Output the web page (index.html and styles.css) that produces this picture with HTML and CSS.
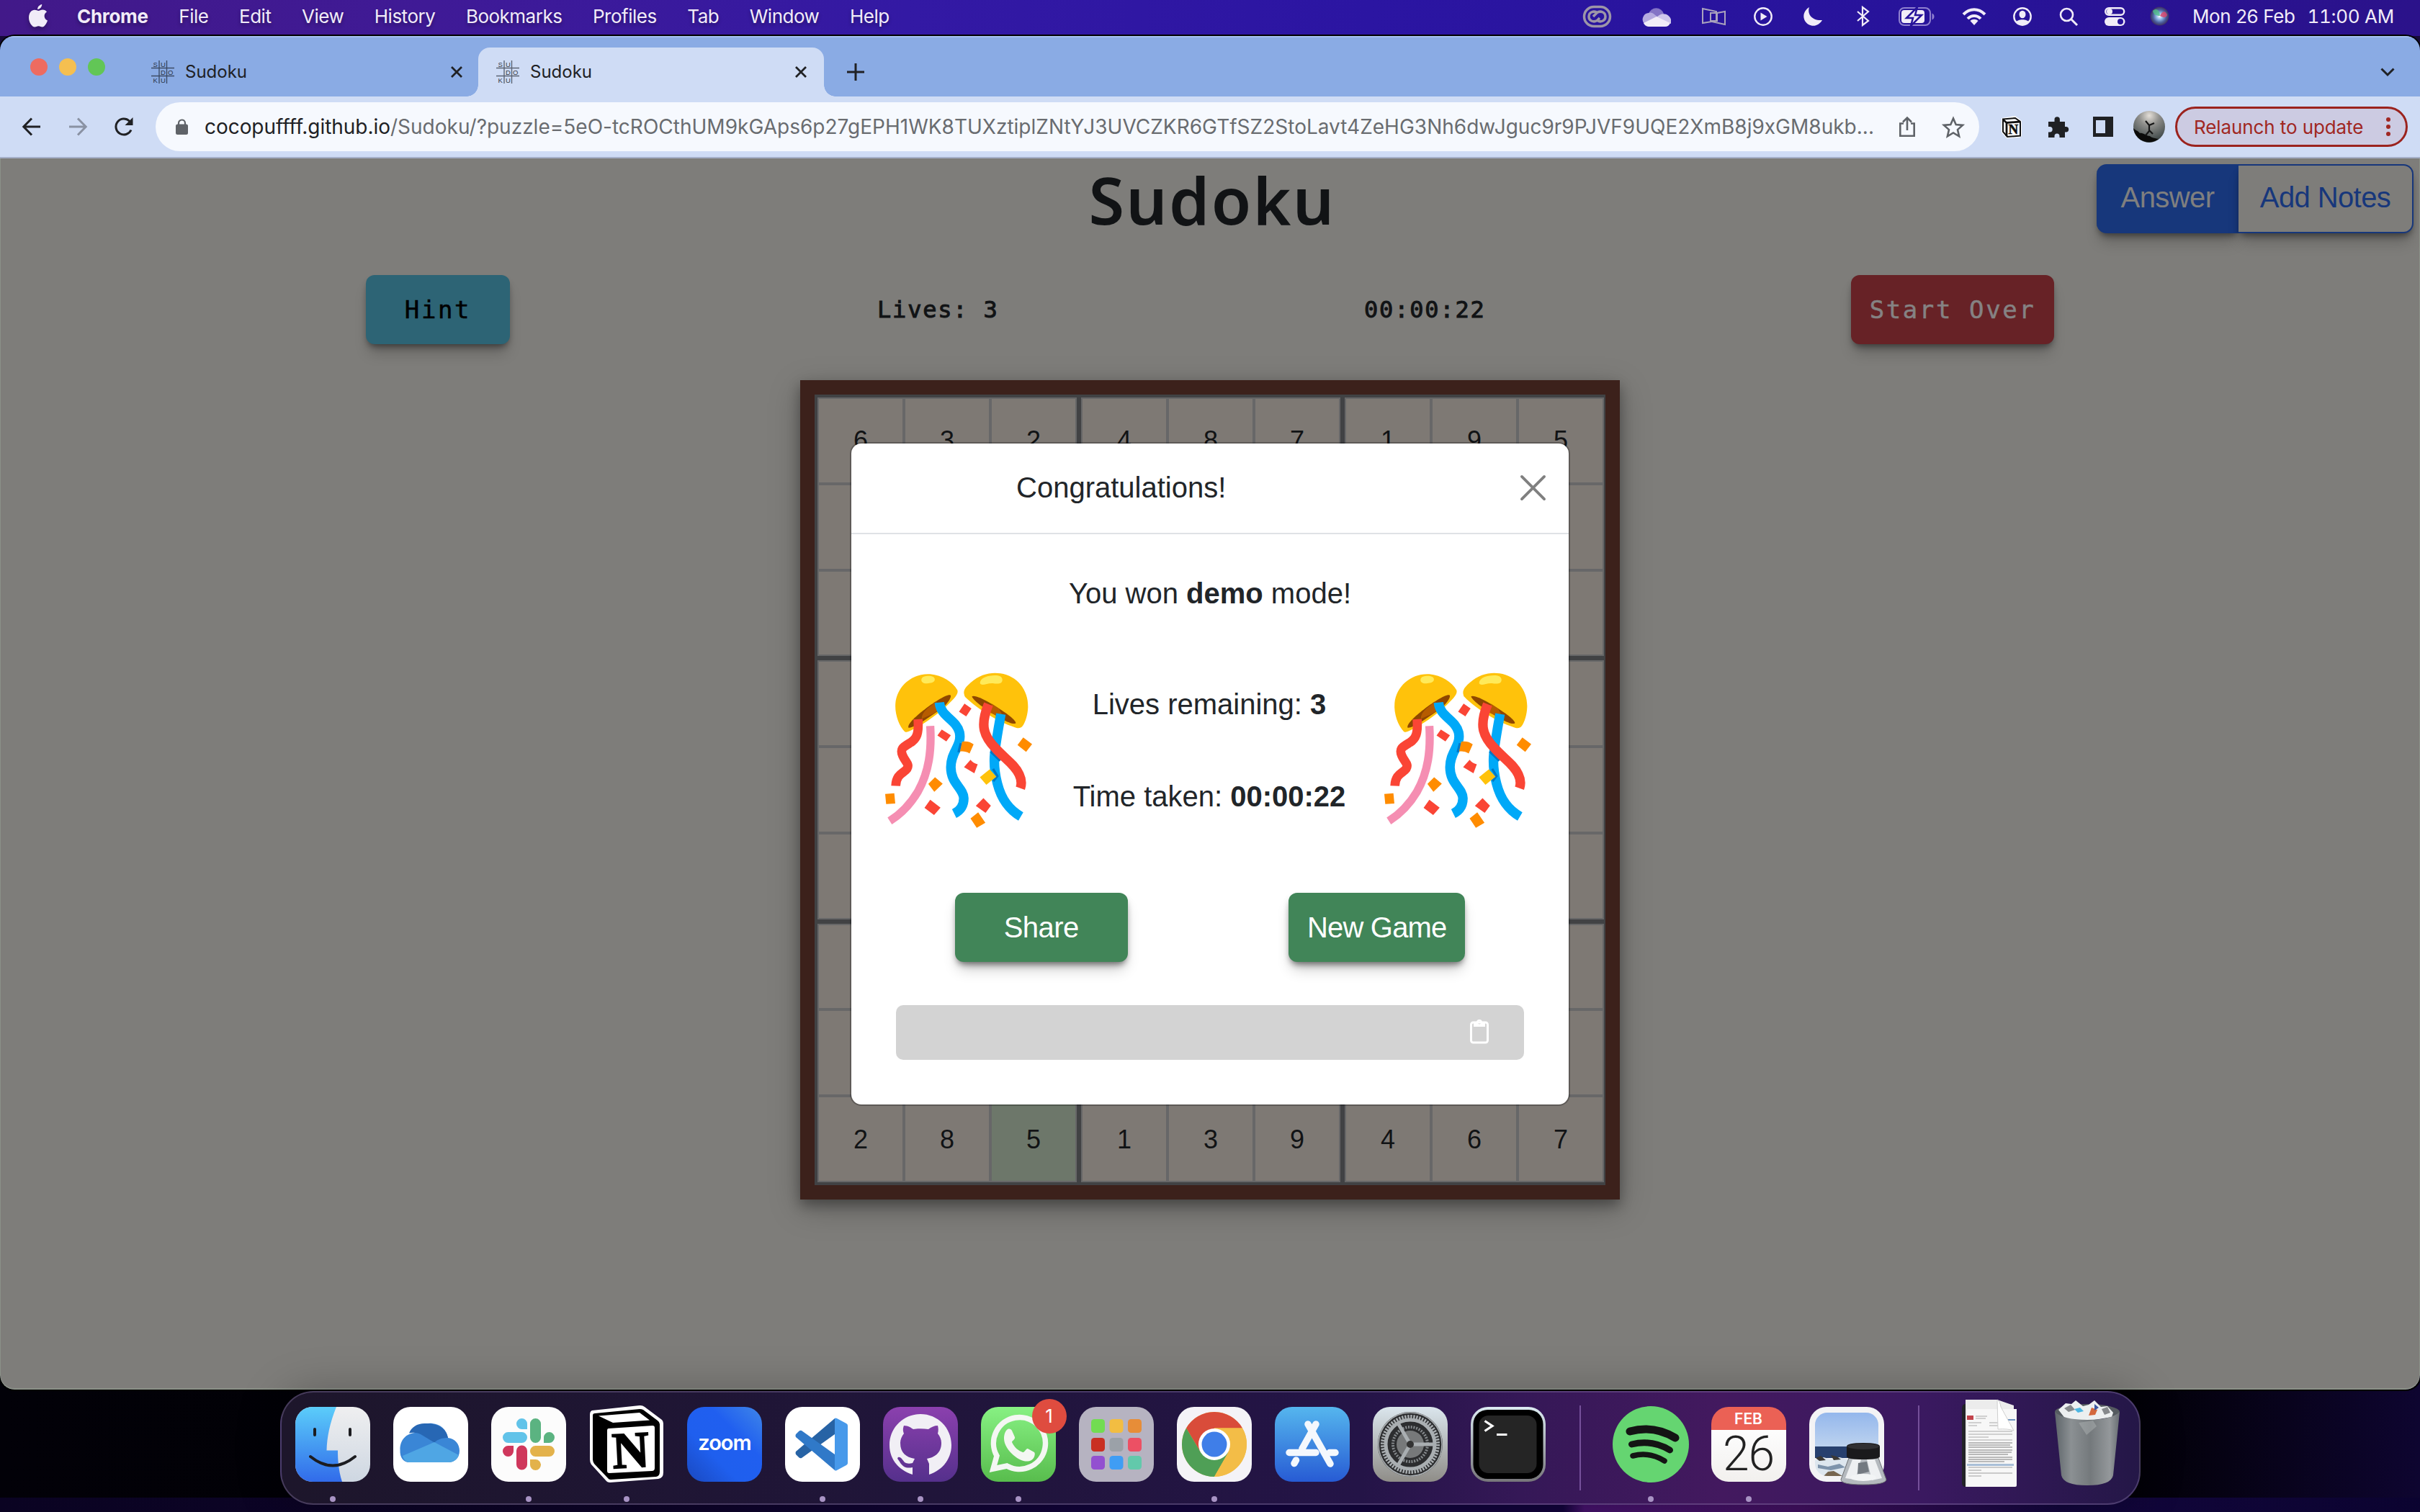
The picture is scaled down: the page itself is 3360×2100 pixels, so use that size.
FILE: index.html
```html
<!DOCTYPE html>
<html lang="en">
<head>
<meta charset="utf-8">
<title>Sudoku</title>
<link rel="stylesheet" href="styles.css">
</head>
<body>
<header class="menubar">
  <svg class="apple" viewBox="0 0 26 32"><path fill="#f1ecf8" d="M18.200 0c.3 3-2.600 7-6 7C11.800 4 14.800.6 18.200 0zM13.500 9c1.500 0 3.200-1.500 5.800-1.500 2.300 0 4.500 1.200 5.700 3.100-5 3-4.200 9.900 1 12C24.500 27 21.800 31.500 18.800 31.500c-2 0-2.800-1.300-5.300-1.300s-3.400 1.300-5.300 1.300C4.500 31.500 0 25 0 18.500 0 11.800 4 7.800 8 7.800c2.300 0 4 1.200 5.500 1.200z"/></svg>
  <nav class="menus"><b>Chrome</b><span>File</span><span>Edit</span><span>View</span><span>History</span><span>Bookmarks</span><span>Profiles</span><span>Tab</span><span>Window</span><span>Help</span></nav>
  <div class="status">
    <svg width="39" height="30" viewBox="0 0 39 30" fill="none" stroke="#9c95a8" stroke-width="3.500"><rect x="1.500" y="1.500" width="36" height="27" rx="13.500"/><path d="M20 10c-5-4-12-1-12 5s7 9 12 5l3-3M14 15l5-5c5-4 12-1 12 5s-7 9-12 5"/></svg>
    <svg width="40" height="28" viewBox="0 0 40 28"><path fill="#8474c6" d="M9 10a11 11 0 0 1 21 0l-9 7z"/><path fill="#b5aae0" d="M3 24a9 9 0 0 1 6-15c3-1 6 0 8 2l10 8z"/><path fill="#cfc7ec" d="M20 15c8-9 18-4 20 3v6z"/><path fill="#f1ecf8" d="M2 23 20 14l19 9c-1 3-4 5-7 5H9c-3 0-6-2-7-5z"/></svg>
    <svg width="33" height="24" viewBox="0 0 33 24" fill="none" stroke="#aaa3bd" stroke-width="2"><path d="M1 1l19 4v13L1 21zM12 7h9v11h-9zM21 7l11-2v18l-18-4"/></svg>
    <svg width="26" height="26" viewBox="0 0 26 26"><circle cx="13" cy="13" r="11.700" fill="none" stroke="#f1ecf8" stroke-width="2.400"/><path fill="#f1ecf8" d="M9.500 7.500v11l9-5.500z"/></svg>
    <svg width="26" height="26" viewBox="0 0 26 26"><path fill="#f1ecf8" d="M8 0C5 9 11 19 26 18 22 25 14 28 7 24-1 19-3 7 8 0z"/></svg>
    <svg width="18" height="27" viewBox="0 0 18 27" fill="none" stroke="#f1ecf8" stroke-width="2.200"><path d="M1 7l15 13-8 6V1l8 6L1 20"/></svg>
    <svg width="50" height="26" viewBox="0 0 50 26"><rect x="1" y="1" width="43" height="24" rx="7" fill="none" stroke="#8f80cf" stroke-width="2"/><rect x="4" y="4" width="32" height="18" rx="4" fill="#f1ecf8"/><path d="M46.500 8.500c4 1 4 8 0 9z" fill="#8f80cf"/><path d="M26 0 11 15h9l-3 11L32 11h-9z" fill="#f1ecf8" stroke="#27139a" stroke-width="2.500"/></svg>
    <svg width="34" height="24" viewBox="0 0 34 24" fill="none" stroke="#f1ecf8" stroke-width="4"><path d="M2 9c9-9 21-9 30 0M8 15c5-5.500 13-5.500 18 0"/><path fill="#f1ecf8" stroke="none" d="M17 24l-5.500-6c3-3 8-3 11 0z"/></svg>
    <svg width="26" height="26" viewBox="0 0 26 26"><circle cx="13" cy="13" r="11.700" fill="none" stroke="#f1ecf8" stroke-width="2.400"/><ellipse cx="13" cy="10" rx="4.500" ry="5.200" fill="#f1ecf8"/><path fill="#f1ecf8" d="M4 21c2-5 16-5 18 0-5 5-13 5-18 0z"/></svg>
    <svg width="26" height="26" viewBox="0 0 26 26" fill="none" stroke="#f1ecf8" stroke-width="2.600"><circle cx="10.500" cy="10.500" r="8.500"/><path d="M17 17l8 8" stroke-width="3"/></svg>
    <svg width="29" height="26" viewBox="0 0 29 26"><rect x="1.200" y="1.200" width="26" height="9.600" rx="4.800" fill="none" stroke="#f1ecf8" stroke-width="2.400"/><circle cx="7" cy="6" r="4" fill="#f1ecf8"/><rect y="14" width="28.500" height="12" rx="6" fill="#f1ecf8"/><circle cx="22" cy="20" r="4" fill="#27139a"/></svg>
    <svg width="27" height="27" viewBox="0 0 27 27"><defs><radialGradient id="siri"><stop offset="0" stop-color="#fff"/><stop offset=".35" stop-color="#8fb5e8"/><stop offset=".7" stop-color="#4b5f9c"/><stop offset="1" stop-color="#3e2f63"/></radialGradient></defs><circle cx="13.500" cy="13.500" r="13" fill="url(#siri)"/><path d="M4 6c5-4 9-2 10 7-6 0-9-2-10-7z" fill="#53c08a" opacity=".8"/><path d="M14 13c4-9 9-6 10-1-2 4-5 4-10 1z" fill="#d8486f" opacity=".85"/></svg>
    <div class="clock"><span>Mon 26 Feb</span><span class="time">11:00 AM</span></div>
  </div>
</header>

<main class="window">
  <div class="tabstrip">
    <div class="lights"><i class="red"></i><i class="amber"></i><i class="green"></i></div>
    <div class="tab"><svg class="favicon" viewBox="0 0 32 32"><g stroke="#3d4c66" stroke-width="1.400"><path d="M11 0v32M21.500 0v32M0 10.500h32M0 21.500h32"/></g><g font-family="Liberation Sans" font-size="9.500" fill="#2b3548"><text x="2.500" y="8.500">S</text><text x="13" y="8.500">U</text><text x="13" y="19.500">D</text><text x="23" y="19.500">O</text><text x="2.500" y="31">K</text><text x="13" y="31">U</text></g></svg><span>Sudoku</span><svg class="x" viewBox="0 0 16 16"><path d="M1 1l14 14M15 1L1 15"/></svg></div>
    <div class="tab active"><svg class="favicon" viewBox="0 0 32 32"><g stroke="#5b6474" stroke-width="1.400"><path d="M11 0v32M21.500 0v32M0 10.500h32M0 21.500h32"/></g><g font-family="Liberation Sans" font-size="9.500" fill="#363b45"><text x="2.500" y="8.500">S</text><text x="13" y="8.500">U</text><text x="13" y="19.500">D</text><text x="23" y="19.500">O</text><text x="2.500" y="31">K</text><text x="13" y="31">U</text></g></svg><span>Sudoku</span><svg class="x" viewBox="0 0 16 16"><path d="M1 1l14 14M15 1L1 15"/></svg></div>
    <svg class="newtab" viewBox="0 0 24 24"><path d="M12 0v24M0 12h24"/></svg>
    <svg class="chevron" viewBox="0 0 20 12"><path d="M1.500 1.500 10 10l8.500-8.500"/></svg>
  </div>
  <div class="toolbar">
    <svg class="nav" viewBox="0 0 26 26"><path d="M25 13H2M13 1.500 1.800 13 13 24.500"/></svg>
    <svg class="nav off" viewBox="0 0 26 26"><path d="M1 13h23M13 1.500 24.200 13 13 24.500"/></svg>
    <svg class="nav reload" viewBox="0 0 26 26"><path d="M23 17.500A11 11 0 1 1 20.500 5L24 8.500"/><path d="M25.500 0v11h-11z" fill="#202124" stroke="none"/></svg>
    <div class="address">
      <svg class="lock" viewBox="0 0 17 22"><path d="M4 9V6a4.500 4.500 0 0 1 9 0v3" fill="none" stroke="#5f6368" stroke-width="2.200"/><rect y="7.500" width="17" height="14.500" rx="2.500" fill="#5f6368"/></svg>
      <p class="url"><span class="host">cocopuffff.github.io</span><span class="path">/Sudoku/?puzzle=5eO-tcROCthUM9kGAps6p27gEPH1WK8TUXztiplZNtYJ3UVCZKR6GTfSZ2StoLavt4ZeHG3Nh6dwJguc9r9PJVF9UQE2XmB8j9xGM8ukb...</span></p>
      <svg class="share" viewBox="0 0 22 28"><path d="M6 9.500H1.300v17.200h19.400V9.500H16M11 19V2M5 7.500l6-6 6 6"/></svg>
      <svg class="star" viewBox="0 0 30 28"><path d="M15 2.500l3.700 8.600 9.300.8-7 6.200 2.100 9.200L15 22.400l-8.100 4.900L9 18.100l-7-6.200 9.300-.8z"/></svg>
    </div>
    <div class="extensions">
      <svg width="30" height="31" viewBox="0 0 30 31"><path d="M1 3 20 0l9 7v21l-3 2-18 1-7-8z" fill="#fff"/><path d="M3 4.500 20 3l7 5v19.500L9 29l-6-7z" fill="#fff" stroke="#111" stroke-width="2"/><path d="M3 5l5 4.500V28M8 9.500 27 8" fill="none" stroke="#111" stroke-width="2.800"/><text x="10.500" y="25" font-family="Liberation Serif" font-weight="bold" font-size="19" fill="#111" stroke="#111" stroke-width=".6">N</text></svg>
      <svg width="30" height="30" viewBox="0 0 30 30"><path fill="#202124" d="M2 8h8.500V5a3.700 3.700 0 0 1 7.400 0v3H25v7h1.500a3.700 3.700 0 0 1 0 7.400H25V30h-7.500v-2a3.500 3.500 0 0 0-7 0v2H2v-7.500h2a3.700 3.700 0 0 0 0-7.400H2z"/></svg>
      <svg width="28" height="28" viewBox="0 0 28 28"><path fill="#202124" fill-rule="evenodd" d="M0 0h28v28H0zM4 5v18h13V5z"/></svg>
    </div>
    <svg class="avatar" viewBox="0 0 44 44"><defs><radialGradient id="sky" cx=".5" cy=".15" r=".8"><stop offset="0" stop-color="#e4dfd8"/><stop offset=".4" stop-color="#8e8e8b"/><stop offset="1" stop-color="#3f4848"/></radialGradient></defs><circle cx="22" cy="22" r="22" fill="url(#sky)"/><path fill="#0b0b0a" d="M0 24c4 4 6 3 9 7 5-1 8 4 14 4 3 3 8 3 12 4A22 22 0 0 1 0 24z"/><path d="M17 14l5 6 7-3M22 19v9l-5 6M22 27l5 5" stroke="#151515" stroke-width="2.200" fill="none"/></svg>
    <div class="relaunch"><span>Relaunch to update</span><svg viewBox="0 0 6 26"><circle cx="3" cy="3" r="3"/><circle cx="3" cy="13" r="3"/><circle cx="3" cy="23" r="3"/></svg></div>
  </div>

  <section class="page">
    <div class="pagehead">
      <h1>Sudoku</h1>
      <div class="mode"><button class="on">Answer</button><button>Add Notes</button></div>
    </div>
    <div class="stats">
      <button class="hint">Hint</button>
      <span class="stat">Lives: 3</span>
      <span class="stat">00:00:22</span>
      <button class="restart">Start Over</button>
    </div>
    <div class="board">
      <div class="box"><i>6</i><i>3</i><i>2</i><i></i><i></i><i></i><i></i><i></i><i></i></div>
      <div class="box"><i>4</i><i>8</i><i>7</i><i></i><i></i><i></i><i></i><i></i><i></i></div>
      <div class="box"><i>1</i><i>9</i><i>5</i><i></i><i></i><i></i><i></i><i></i><i></i></div>
      <div class="box"><i></i><i></i><i></i><i></i><i></i><i></i><i></i><i></i><i></i></div>
      <div class="box"><i></i><i></i><i></i><i></i><i></i><i></i><i></i><i></i><i></i></div>
      <div class="box"><i></i><i></i><i></i><i></i><i></i><i></i><i></i><i></i><i></i></div>
      <div class="box"><i></i><i></i><i></i><i></i><i></i><i></i><i>2</i><i>8</i><i class="entered">5</i></div>
      <div class="box"><i></i><i></i><i></i><i></i><i></i><i></i><i>1</i><i>3</i><i>9</i></div>
      <div class="box"><i></i><i></i><i></i><i></i><i></i><i></i><i>4</i><i>6</i><i>7</i></div>
    </div>

    <div class="modal">
      <div class="modalhead"><h2>Congratulations!</h2><svg viewBox="0 0 36 36"><path d="M2 2l32 32M34 2 2 34"/></svg></div>
      <p class="won">You won <b>demo</b> mode!</p>
      <div class="party">
        <svg class="confetti" viewBox="147 163 613 647">
          <defs><g id="confetti">
            <path fill="#ffc20b" d="M228 408C205 385 186 335 190 290 197 217 262 164 335 169c50 5 95 33 113 66 6 14-8 32-40 62-45 42-105 85-160 110-8 4-14 5-20 1z"/>
            <path fill="#ffc20b" d="M477 255c-5-18 4-30 26-50 40-36 85-45 125-39 70 10 117 70 115 140-1 30-10 62-23 80-8 10-20 10-34 4-70-22-150-75-195-116-8-8-13-11-14-19z"/>
            <path fill="#8f4700" d="M244 392c-4-12 20-38 60-70 45-36 100-70 114-66 9 4-5 28-30 53l-85 58c-28 18-52 28-59 25z"/>
            <path fill="#b65c00" d="M300 355c-2-15 10-40 60-70l30 20-40 28z"/>
            <path fill="#8f4700" d="M509 262c7-7 42 6 80 30 50 29 105 68 103 81-5 7-28 0-60-18-50-26-120-76-123-93z"/>
            <path fill="#b65c00" d="M592 293l30 20 20 40-60-24z"/>
            <path fill="#ffea59" d="M298 192c2-14 17-16 30-16 15 0 27 5 26 16-1 11-14 14-27 15-17 3-30-3-29-15zM543 208c-2-16 15-28 40-32 28-4 52-2 53 16 0 19-20 18-40 15-23-2-45 14-53 1z"/>
            <g fill="none">
              <path stroke="#f58eb2" stroke-width="34" d="M335 385c6 100-4 190-52 275-32 54-70 92-117 122"/>
              <path stroke="#fa4535" stroke-width="38" d="M284 357c4 60-5 80-30 97-30 18-47 25-34 55 12 28 30 35 18 55-12 18-45 20-47 71"/>
              <path stroke="#00a9f8" stroke-width="40" d="M630 335c-28 160-38 200-15 290 18 70 50 110 98 138"/>
              <path stroke="#00a9f8" stroke-width="40" d="M373 287c6 60 70 70 84 125 12 55-36 80-36 145 0 70 52 85 54 130 0 30-12 50-40 64" />
              <path stroke="#0077c5" stroke-width="10" d="M587 492l40 38M597 564l18 30-17 22M463 457l-10 38"/>
              <path stroke="#fa4535" stroke-width="40" d="M578 294c-34 85-24 130 30 185 35 40 78 65 98 108 11 23 12 38 5 58"/>
            </g>
            <path fill="#fa4535" d="M478 292l29 20-22 33-30-19zM383 400l38 24-19 26-37-25zM503 526c8 10 17 15 30 19l-14 38-43-26zM335 693l43 33-27 31-40-30zM557 686l31 32-22 30-41-29z"/>
            <path fill="#ff8c00" d="M723 433l37 28-25 32-36-28zM468 451c18-4 36 1 48 11l-17 38c-13-8-26-10-40-8zM355 599l32 27-35 34-25-33zM147 669l38-3 4 43-38 2zM535 746l30 43-36 21-26-39z"/>
            <path fill="#ffc20b" d="M583 566l28 31-42 34-27-32z"/>
          </g></defs>
          <use href="#confetti"/>
        </svg>
        <div class="result"><p>Lives remaining: <b>3</b></p><p>Time taken: <b>00:00:22</b></p></div>
        <svg class="confetti" viewBox="147 163 613 647"><use href="#confetti"/></svg>
      </div>
      <div class="actions"><button class="sharebtn">Share</button><button class="newgame">New Game</button></div>
      <div class="copybox"><svg viewBox="0 0 26 35"><rect x="1.500" y="5" width="23" height="28" rx="3" fill="none" stroke="#fff" stroke-width="3"/><path fill="#fff" fill-rule="evenodd" d="M5 5h4a4 4 0 0 1 8 0h4v6H5zM13 3.500a2 2 0 1 0 0 4 2 2 0 0 0 0-4z"/></svg></div>
    </div>
  </section>
</main>

<footer class="dock">
  <div class="app running"><svg viewBox="0 0 104 104"><defs><linearGradient id="fblue" x2="0" y2="1"><stop offset="0" stop-color="#5bcdfa"/><stop offset="1" stop-color="#316bea"/></linearGradient><linearGradient id="fgrey" x2="0" y2="1"><stop offset="0" stop-color="#efeff0"/><stop offset="1" stop-color="#ced7e2"/></linearGradient></defs><rect width="104" height="104" rx="24" fill="url(#fgrey)"/><path fill="url(#fblue)" d="M24 0h33C48 22 44 42 43.500 60.500H59C59 78 61 92 65 104H24A24 24 0 0 1 0 80V24A24 24 0 0 1 24 0z"/><path d="M27 31v8M76 31v8M21 69q31 25 62 0" fill="none" stroke="#1c1c20" stroke-width="4" stroke-linecap="round"/></svg></div>
  <div class="app"><svg viewBox="0 0 104 104"><rect width="104" height="104" rx="24" fill="#fff"/><path fill="#3a86d6" d="M22 77C14 77 9 70 9.500 60 9 46 18 37 30 36c4-9 14-14 24-13 12 1 20 9 22 20 10 1 16 9 16 18 0 10-7 16-15 16z"/><path fill="#2767b4" d="M22 36.500c3-9 13-14.500 24-13.500C62 23 74 30 76 43c-8 0-14 2-19 6.500L38 38c-5-2-10-3-16-1.500z"/><path fill="#4fa6e4" d="M13 68l44-19 34 18c-2 6-8 10-14 10H22c-4 0-8-4-9-9z"/></svg></div>
  <div class="app running"><svg viewBox="0 0 104 104"><rect width="104" height="104" rx="24" fill="#fcfcfc"/><path fill="#62c3e9" d="M50 31H42.500A7.500 7.500 0 1 1 50 23.500zM23.500 35h19a7.500 7.500 0 0 1 0 15h-19a7.500 7.500 0 0 1 0-15z"/><path fill="#5bb381" d="M54 23.500a7.500 7.500 0 0 1 15 0v19a7.500 7.500 0 0 1-15 0zM73 50v-7.500a7.500 7.500 0 1 1 7.500 7.500z"/><path fill="#cf375c" d="M35 61a7.500 7.500 0 0 1 15 0v19a7.500 7.500 0 0 1-15 0zM31 54v7.500a7.500 7.500 0 1 1-7.500-7.500z"/><path fill="#e3b24b" d="M61.500 54h19a7.500 7.500 0 0 1 0 15h-19a7.500 7.500 0 0 1 0-15zM54 73h7.500a7.500 7.500 0 1 1-7.500 7.500z"/></svg></div>
  <div class="app running"><svg viewBox="0 0 104 104"><path fill="#fff" d="M4 5 70-2q4-.5 7 2l24 18q2 2 2 5v68q0 8-7 9l-67 5q-4 0-6-3L3 80q-2-3-2-7V11q0-5 3-6z"/><path d="M8 9 70 3q3 0 5 1l20 15q3 2 3 5v66q0 6-5 7l-63 4q-3 0-4-2L7 79q-2-3-2-6V12q0-3 3-3z"/><path fill="#fff" d="M13 12.500 70 8l14 10.500L33 22zM27 30l61-4q3 0 3 3v56q0 4-4 4l-59 3q-3 0-3-3V33q0-3 2-3z"/><text x="32" y="84" font-family="Liberation Serif" font-weight="bold" font-size="71" stroke="#000" stroke-width="2" transform="rotate(-3 58 60)">N</text></svg></div>
  <div class="app"><svg viewBox="0 0 104 104"><defs><linearGradient id="zb" x1="1" x2="0" y2="1"><stop offset="0" stop-color="#3f86e8"/><stop offset=".35" stop-color="#205ff0"/><stop offset=".65" stop-color="#1f5fee"/><stop offset="1" stop-color="#1a49c0"/></linearGradient></defs><rect width="104" height="104" rx="24" fill="url(#zb)"/><text x="52" y="60" text-anchor="middle" font-family="Inter" font-weight="600" font-size="29" letter-spacing="-1" fill="#fff">zoom</text></svg></div>
  <div class="app running"><svg viewBox="0 0 104 104"><rect width="104" height="104" rx="24" fill="#fff"/><path fill="#2763a5" d="M69 16v22L23 71q-2 1-4-1l-4-4q-1-2 0-4z"/><path fill="#3079c8" d="M69 88V66L23 33q-2-1-4 1l-4 4q-1 2 0 4z"/><path fill="#4799ea" d="M69 16q1-1 3 0l13 7q2 1 2 3v52q0 2-2 3l-13 7q-2 1-3 0z"/></svg></div>
  <div class="app running"><svg viewBox="0 0 104 104"><defs><linearGradient id="gh" x2="0" y2="1"><stop offset="0" stop-color="#8b40ae"/><stop offset="1" stop-color="#55308c"/></linearGradient></defs><rect width="104" height="104" rx="24" fill="url(#gh)"/><path fill="#f1eff5" d="M52 10C28 10 9 29 9 53c0 20 13 35 32 41V84c-9 2-14-1-18-8-2-3-4-4-2-6 4-1 6 4 9 7 3 2 7 2 11 1l3-6c-12-2-20-8-20-22 0-5 2-9 5-13-2-5-1-8 0-11 6 0 10 3 13 5 7-1 14-1 21 0 4-3 8-5 13-5 1 4 1 7 0 11 3 4 5 8 5 13 0 14-9 20-20 22l3 7v15c18-6 31-21 31-41C95 29 76 10 52 10z"/></svg></div>
  <div class="app running"><svg viewBox="0 0 104 104"><defs><linearGradient id="wa" x2="0" y2="1"><stop offset="0" stop-color="#87f183"/><stop offset="1" stop-color="#58bd4d"/></linearGradient></defs><rect width="104" height="104" rx="24" fill="url(#wa)"/><path d="M17 86l5-18a36 36 0 1 1 14 14z" fill="none" stroke="#f4f7f3" stroke-width="7.500"/><path fill="#f4f7f3" d="M37 31c3-1 5 0 6 2l4 9c1 3-4 5-4 7 3 7 9 12 15 14 3 0 5-6 7-5l9 5c2 2 0 9-4 11-7 4-17 0-25-7-7-6-13-15-13-23 0-6 2-11 5-13z"/></svg><b class="badge">1</b></div>
  <div class="app"><svg viewBox="0 0 104 104"><rect width="104" height="104" rx="24" fill="#b6b3c1"/><g><rect x="17" y="17" width="19" height="19" rx="4.500" fill="#72dc52"/><rect x="42.500" y="17" width="19" height="19" rx="4.500" fill="#f2bd42"/><rect x="68" y="17" width="19" height="19" rx="4.500" fill="#e78d38"/><rect x="17" y="43" width="19" height="19" rx="4.500" fill="#c92f23"/><rect x="42.500" y="43" width="19" height="19" rx="4.500" fill="#9ba1a8"/><rect x="68" y="43" width="19" height="19" rx="4.500" fill="#ec5064"/><rect x="17" y="68" width="19" height="19" rx="4.500" fill="#9350d0"/><rect x="42.500" y="68" width="19" height="19" rx="4.500" fill="#3f9df4"/><rect x="68" y="68" width="19" height="19" rx="4.500" fill="#62c9ab"/></g></svg></div>
  <div class="app running"><svg viewBox="0 0 104 104"><rect width="104" height="104" rx="24" fill="#f4f3f7"/><circle cx="52" cy="52" r="45" fill="#f3bd47"/><path fill="#d94c3a" d="M13 29.500A45 45 0 0 1 91 29.500H52L33 63z"/><path fill="#4f9f56" d="M13 29.500A45 45 0 0 0 52 97l19.500-34H33z"/><path fill="#f3bd47" d="M52 97a45 45 0 0 0 39-67.500H52L71.500 63z"/><circle cx="52" cy="52" r="22" fill="#fff"/><circle cx="52" cy="52" r="17.500" fill="#3f7ee8"/></svg></div>
  <div class="app"><svg viewBox="0 0 104 104"><defs><linearGradient id="as" x2="0" y2="1"><stop offset="0" stop-color="#55b6ee"/><stop offset="1" stop-color="#275bd4"/></linearGradient></defs><rect width="104" height="104" rx="24" fill="url(#as)"/><g stroke="#f4f8fd" stroke-width="9.500" stroke-linecap="round"><path d="M20 63.500h37M76 63.500h8M46 24l31 55M57 24 38 58M29.500 74 27 78.500"/></g></svg></div>
  <div class="app"><svg viewBox="0 0 104 104"><defs><linearGradient id="st" x2="0" y2="1"><stop offset="0" stop-color="#dbe6ed"/><stop offset="1" stop-color="#8f8d88"/></linearGradient></defs><rect width="104" height="104" rx="24" fill="url(#st)"/><circle cx="52" cy="52" r="45" fill="#2c2d2f"/><g fill="none" stroke="#a9aeb1"><circle cx="52" cy="52" r="38.500" stroke-width="5" stroke-dasharray="2.400 1.630"/><circle cx="52" cy="52" r="34" stroke-width="5"/><circle cx="52" cy="52" r="24" stroke-width="4" stroke-dasharray="2 1.770" stroke="#85898c"/></g><circle cx="52" cy="52" r="19" fill="#77797a"/><circle cx="52" cy="52" r="44" fill="none" stroke="#a9aeb1" stroke-width="1.500"/><path d="M52 52h33M52 52 35.500 23.500M52 52 35.500 80.500" stroke="#a9aeb1" stroke-width="5"/><circle cx="52" cy="52" r="5" fill="#333"/></svg></div>
  <div class="app"><svg viewBox="0 0 104 104"><defs><linearGradient id="tm" x2="0" y2="1"><stop offset="0" stop-color="#dcebf2"/><stop offset="1" stop-color="#77767a"/></linearGradient></defs><rect width="104" height="104" rx="24" fill="url(#tm)"/><rect x="3.500" y="4" width="97" height="96" rx="20" fill="#000"/><rect x="11.500" y="12" width="80" height="80" rx="13" fill="#252525"/><path d="M19.500 19.500 30 26.500l-10.500 7M36 38.500h14.500" fill="none" stroke="#fff" stroke-width="3.200"/></svg></div>
  <i class="divider"></i>
  <div class="app running"><svg viewBox="0 0 104 104"><circle cx="52" cy="52" r="53" fill="#65d571"/><g fill="none" stroke="#141414" stroke-linecap="round"><path d="M23 34q33-9 63 9" stroke-width="11"/><path d="M25.500 52q28-7 53 8" stroke-width="9"/><path d="M27 68q23-6 44 7" stroke-width="7.500"/></g></svg></div>
  <div class="app running calendar"><span class="month">FEB</span><span class="day">26</span></div>
  <div class="app"><svg viewBox="0 0 104 104"><defs><linearGradient id="pv" x2="0" y2="1"><stop offset="0" stop-color="#94b7ec"/><stop offset="1" stop-color="#bdd3ef"/></linearGradient></defs><rect width="104" height="104" rx="24" fill="#f3f3f5"/><clipPath id="ph"><rect x="8" y="8" width="88" height="88" rx="17"/></clipPath><g clip-path="url(#ph)"><path fill="url(#pv)" d="M8 8h88v48H8z"/><path fill="#27406e" d="M8 55h88v16H8z"/><path fill="#dde6ee" d="M8 74l12-4 10 3 12-3 15 4 40-4v28H8z"/><path fill="#3b3834" d="M9 71l7-3 7 6-9 1zM30 67l8 2 6 4-10 1z"/><path fill="#7d93ab" d="M12 80l14 3 16-4 8 5-20 4-18-3z"/><path fill="#76654f" d="M20 96l6-6 8-1 12 7z"/></g><path fill="#b4b9be" stroke="#6d7074" stroke-width="1" d="M55 71h41l11 30q-1 7-32 7t-31-7z"/><path fill="#eef0f2" d="M60 73h12l-8 28-14-2zM80 73h11l10 26-14 3z"/><path fill="#737980" d="M68 78l12-2 3 14-16 4z"/><ellipse cx="75" cy="98" rx="18" ry="5" fill="#f2f4f5"/><path fill="#1a1a1c" d="M52 55q0-5 23-5t23 5v14q-1 4-23 4t-23-4z"/><ellipse cx="75" cy="55" rx="22" ry="4" fill="#303033"/></svg></div>
  <i class="divider"></i>
  <div class="app"><svg viewBox="0 0 104 104"><path fill="#222327" d="M14 2q0-6 5-6v115q-5 0-5-5z"/><path fill="#ececec" d="M19-10h44l23 8v113H19z"/><path fill="#f7f7f7" d="M21 3h69v106q0 2-2 2H21z"/><rect x="21" y="12" width="9" height="6" fill="#c2434b"/><rect x="78" y="17" width="10" height="2" fill="#6d93c0"/><g stroke="#a5a5a5" stroke-width="1.500"><path d="M33 13h16M33 16h14M23 22h18M52 22h16M23 26h12M52 26h18M23 34h61M23 38h61M23 42h28M23 46h61" stroke="#c4c4c4"/><path d="M23 50h61M23 53h58M23 56h61M23 60h61M23 63h60M23 66h55M23 70h61M23 73h61M23 76h50"/><path d="M23 84h61M23 88h18M23 92h61M23 96h18" stroke="#bcbcbc"/></g><path fill="#a9bfd8" d="M21 79h65v3H21z"/><path fill="#fff" stroke="#cfcfcf" d="M63-10q4 2 5 10l18 33q-8-3-22-2z"/></svg></div>
  <div class="app"><svg viewBox="0 0 104 104"><defs><linearGradient id="tr"><stop offset="0" stop-color="#5e656a"/><stop offset=".25" stop-color="#8b9093"/><stop offset=".55" stop-color="#74797c"/><stop offset=".85" stop-color="#94989b"/><stop offset="1" stop-color="#666c71"/></linearGradient></defs><ellipse cx="52" cy="7" rx="45" ry="11" fill="#555b60"/><path fill="#eceff0" d="M12 4l10-9 8 1 6-5 10 8 8-2 8-6 9 9 9-1 8 9-2 6-30 5-34-2z"/><path fill="#86898c" d="M20 2l9-5 6 7-9 3zM72 3l8-3 4 8-8 3z"/><path fill="#4db6e2" d="M34 3l8-2 5 5-8 2z"/><path fill="#d4683d" d="M58 1l8 3-3 7-9 1z"/><path fill="#3d57a0" d="M62-4l6 5-6 4z"/><path fill="url(#tr)" d="M7 7q12 11 45 11T97 7l-9 88q-3 14-36 14T16 95z"/><path fill="#b9bdbf" opacity=".4" d="M40 22l20-3 5 8-14 12z"/></svg></div>
</footer>
</body>
</html>
```
FILE: styles.css
```css
* { box-sizing: border-box; }
body {
  margin: 0;
  width: 3360px;
  height: 2100px;
  overflow: hidden;
  display: flex;
  flex-direction: column;
  font-family: Inter, sans-serif;
  background:
    linear-gradient(90deg, transparent 2170px, #45126b 2200px, #40105f 2500px, #12063c 2860px, #0b0330 100%) 0 2080px / 3360px 20px no-repeat,
    linear-gradient(90deg, #0a0322, #0d0428 900px, #12043b 1600px, #12043b) 0 2080px / 3360px 20px no-repeat,
    linear-gradient(90deg, #020108, #000 1700px, #000 2900px, #0e0530) 0 1900px / 3360px 200px no-repeat,
    #160a3a;
}
h1, h2, p { margin: 0; font-weight: 400; }
svg { display: block; overflow: visible; flex: none; }
button { border: 0; font: inherit; padding: 0; }

.menubar {
  height: 50px;
  display: flex;
  align-items: center;
  padding: 0 0 5px 40px;
  color: #f1ecf8;
  font-size: 26px;
  white-space: nowrap;
  background: linear-gradient(90deg, #421989, #3f1a96 600px, #3319a4 1260px, #2b15a2 1900px, #27139a 2700px, #2b128a);
}
.apple { width: 26px; height: 32px; margin-top: -2px; filter: drop-shadow(0 3px 3px rgba(0, 0, 0, .3)); }
.menus { display: flex; gap: 42.600px; margin-left: 41px; letter-spacing: -.5px; text-shadow: 0 3px 5px rgba(0, 0, 0, .3); }
.menus b { letter-spacing: -.3px; }
.status {
  position: absolute;
  left: 2198px;
  height: 46px;
  display: grid;
  grid-template-columns: 82px 83px 72px 69px 74px 58px 88px 71px 64px 63px 63px 59px auto;
  align-items: center;
}
.clock { display: flex; gap: 17px; letter-spacing: -.4px; }
.time { font-variant-numeric: tabular-nums; letter-spacing: -.3px; }

.window {
  height: 1880px;
  border-radius: 20px;
  overflow: hidden;
  display: flex;
  flex-direction: column;
  box-shadow: 0 0 0 2px #000;
}
.tabstrip {
  height: 84px;
  flex: none;
  background: #8aabe4;
  border-top: 2px solid #a4bff0;
  display: flex;
  align-items: flex-end;
  padding: 0 35px 0 42px;
}
.lights { display: flex; gap: 16px; padding-bottom: 29px; width: 142px; }
.lights i { width: 24px; height: 24px; border-radius: 50%; }
.red { background: #ed6b60; }
.amber { background: #f5bf50; }
.green { background: #62c656; }
.tab {
  position: relative;
  width: 480px;
  height: 68px;
  display: flex;
  align-items: center;
  padding: 0 22px 1px 26px;
  color: #202124;
  font-size: 24px;
}
.tab.active { background: #cfdcf5; border-radius: 16px 16px 0 0; padding-left: 25px; padding-right: 24px; }
.tab.active::before, .tab.active::after {
  content: "";
  position: absolute;
  bottom: 0;
  width: 16px;
  height: 16px;
}
.tab.active::before { left: -16px; background: radial-gradient(circle at 0 0, transparent 15.500px, #cfdcf5 16px); }
.tab.active::after { right: -16px; background: radial-gradient(circle at 100% 0, transparent 15.500px, #cfdcf5 16px); }
.favicon { width: 32px; height: 32px; margin-right: 15px; }
.x { width: 16px; height: 16px; margin-left: auto; fill: none; stroke: #202124; stroke-width: 2.800; }
.newtab { width: 24px; height: 24px; margin: 0 0 22px 32px; stroke: #202124; stroke-width: 3; fill: none; }
.chevron { width: 20px; height: 12px; margin: 0 0 28px auto; stroke: #202124; stroke-width: 3; fill: none; }
.toolbar {
  height: 86px;
  flex: none;
  background: #cfdcf5;
  border-bottom: 2px solid #a5b0c8;
  display: flex;
  align-items: center;
  padding: 0 17px 0 31px;
}
.nav { width: 26px; height: 26px; margin-right: 38px; stroke: #202124; stroke-width: 3; fill: none; }
.nav.off { stroke: #8a92a3; }
.nav.reload { margin-right: 31px; }
.address {
  width: 2532px;
  height: 68px;
  border-radius: 34px;
  background: #f6f9fe;
  display: flex;
  align-items: center;
  padding: 0 21px 0 28px;
}
.lock { width: 17px; height: 22px; margin-right: 23px; }
.url { width: 2353px; font-size: 28px; white-space: nowrap; color: #696c70; }
.host { color: #202124; letter-spacing: -.05px; }
.path { letter-spacing: .01px; }
.share { width: 22px; height: 28px; fill: none; stroke: #5f6368; stroke-width: 2.600; }
.star { width: 30px; height: 28px; margin-left: auto; fill: none; stroke: #5f6368; stroke-width: 2.600; }
.extensions { display: flex; align-items: center; gap: 34px; margin-left: 30px; }
.avatar { width: 44px; height: 44px; margin-left: 28px; }
.relaunch {
  width: 323px;
  height: 56px;
  margin-left: 14px;
  border: 3px solid #9b231e;
  border-radius: 28px;
  background: #cccbe2;
  color: #a02722;
  font-size: 26px;
  letter-spacing: -.1px;
  white-space: nowrap;
  display: flex;
  align-items: center;
  justify-content: space-between;
  padding: 0 21px 0 23px;
}
.relaunch svg { width: 6px; height: 26px; fill: #a02722; }

.page {
  position: relative;
  flex: 1;
  background: #7e7d7a;
  border: solid #8b9188;
  border-width: 0 1px 2px;
  border-radius: 0 0 20px 20px;
  font-family: "Liberation Sans", Arial, sans-serif;
}
.pagehead { display: grid; grid-template-columns: 1fr auto 1fr; height: 162px; padding-right: 8px; }
h1 {
  grid-column: 2;
  font: 600 90px/114px "Noto Sans", sans-serif;
  letter-spacing: 2.300px;
  padding-left: 14px;
  color: #111315;
}
.mode { justify-self: end; display: flex; height: 96px; margin-top: 8px; }
.mode button {
  width: 243px;
  border: 2px solid #17377b;
  border-left: 0;
  border-radius: 0 14px 14px 0;
  background: #7e7d7a;
  color: #17377b;
  font-size: 40px;
  letter-spacing: -.6px;
  padding-bottom: 4px;
  box-shadow: 0 6px 10px -3px rgba(0, 0, 0, .45), 0 16px 20px -4px rgba(0, 0, 0, .2);
}
.mode .on { width: 197px; border-radius: 14px 0 0 14px; background: #17377b; color: #7f7f7f; padding-left: 2px; }
.stats { display: flex; justify-content: space-between; align-items: center; height: 96px; padding: 0 507px; font-family: "DejaVu Sans Mono", monospace; }
.stats button {
  height: 96px;
  border-radius: 12px;
  font-size: 34px;
  letter-spacing: 2.600px;
  box-shadow: 0 6px 10px -3px rgba(0, 0, 0, .45), 0 16px 20px -4px rgba(0, 0, 0, .2);
}
.hint { width: 200px; background: #2d6475; color: #000; -webkit-text-stroke: .5px #000; }
.restart { width: 282px; background: #672226; color: #858283; -webkit-text-stroke: .5px #858283; }
.stat { width: 166px; font-size: 32px; letter-spacing: 1.800px; color: #111315; -webkit-text-stroke: 1px #111315; white-space: nowrap; }
.board {
  width: 1138px;
  height: 1138px;
  margin: 50px auto 0;
  border: 20px solid #3c211b;
  padding: 4px 2px 4px 4px;
  background: #414244;
  display: grid;
  grid-template: repeat(3, 1fr) / repeat(3, 1fr);
  gap: 6px;
  box-shadow: 0 8px 16px rgba(0, 0, 0, .3), 0 12px 40px rgba(0, 0, 0, .25);
}
.box { display: grid; grid-template: repeat(3, 1fr) / repeat(3, 1fr); }
.box i {
  display: flex;
  align-items: center;
  justify-content: center;
  padding-top: 1px;
  border: 2px solid #676768;
  background: #7e7974;
  color: #111315;
  font: 36px/1 "Liberation Sans", sans-serif;
  min-height: 0;
}
.box .entered { background: #6d776a; }

.modal {
  position: absolute;
  left: 1181px;
  top: 396px;
  width: 996px;
  height: 918px;
  background: #fff;
  border-radius: 14px;
  box-shadow: 0 0 0 2px rgba(0, 0, 0, .25);
  font-size: 40px;
  line-height: 60px;
  color: #212529;
}
.modalhead { height: 126px; border-bottom: 2px solid #dfe2e6; display: flex; align-items: center; justify-content: space-between; padding: 0 32px 2px 229px; }
h2 { font-size: 40px; }
.modalhead svg { width: 35px; height: 35px; stroke: #808080; stroke-width: 4; stroke-linecap: round; }
.won { padding-top: 52px; text-align: center; }
.party { display: flex; justify-content: space-between; padding: 0 52px 0 47px; margin-top: 80px; height: 216px; }
.confetti { width: 204px; height: 216px; }
.result { padding: 14px 0 0 3px; text-align: center; display: flex; flex-direction: column; gap: 68px; }
.actions { display: flex; justify-content: space-around; padding: 0 32px; margin-top: 90px; }
.actions button {
  height: 96px;
  border-radius: 12px;
  background: #418558;
  color: #fff;
  box-shadow: 0 6px 10px -3px rgba(0, 0, 0, .55), 0 14px 20px -4px rgba(0, 0, 0, .2);
}
.sharebtn { width: 240px; letter-spacing: -.5px; }
.newgame { width: 245px; letter-spacing: -.8px; }
.copybox { width: 872px; height: 76px; margin: 60px 0 0 62px; border-radius: 10px; background: #d3d3d3; display: flex; align-items: center; justify-content: flex-end; padding: 0 49px 3px 0; }
.copybox svg { width: 26px; height: 35px; }

.dock {
  width: 2583px;
  height: 158px;
  margin: 2px auto 0;
  border: 2px solid rgba(150, 130, 180, .35);
  border-radius: 46px;
  background: linear-gradient(90deg, #1d162b, #20153a 900px, #241447 1500px, #351857 1720px, #43195f 2000px, #3a1960 2280px, #241747);
  box-shadow: 0 0 60px rgba(0, 0, 0, .25);
  display: flex;
  gap: 32px;
  padding: 20px 0 0 19px;
  position: relative;
}
.app { position: relative; width: 104px; height: 104px; flex: none; }
.app svg { width: 104px; height: 104px; }
.running::after {
  content: "";
  position: absolute;
  left: 48px;
  top: 124px;
  width: 8px;
  height: 8px;
  border-radius: 50%;
  background: #a893c4;
}
.divider { flex: none; width: 2px; height: 118px; margin: -2px 13px 0 15px; background: #75509a; }
.badge {
  position: absolute;
  left: 71px;
  top: -11px;
  width: 48px;
  height: 48px;
  border-radius: 50%;
  background: #df4c3f;
  color: #fff;
  font-weight: 400;
  font-size: 26px;
  line-height: 48px;
  text-align: center;
}
.calendar { border-radius: 24px; background: linear-gradient(#eb6155 32px, #fdfdfd 32px, #f2f0ee); display: flex; flex-direction: column; align-items: center; }
.month { font-weight: 600; font-size: 21px; line-height: 34px; color: #fff; }
.day { font: 300 66px/64px Roboto, sans-serif; color: #222; letter-spacing: -1px; }
```
